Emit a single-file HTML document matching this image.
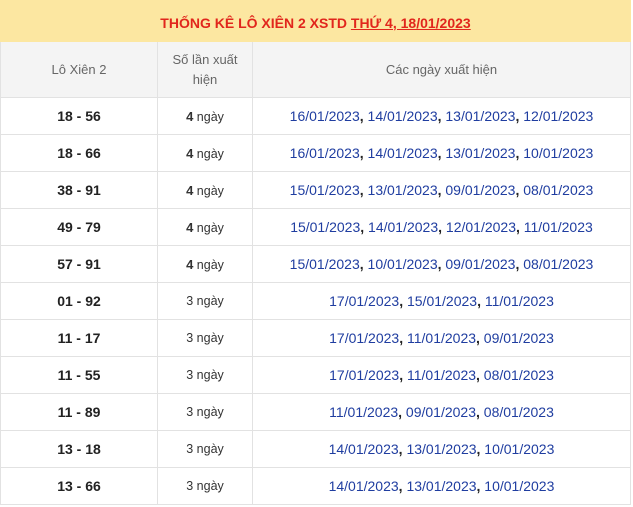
<!DOCTYPE html>
<html><head><meta charset="utf-8"><style>
body{margin:0;background:#fff;font-family:"Liberation Sans",Arial,sans-serif;}
.t{position:absolute;left:0;top:0;width:631px;border-collapse:collapse;table-layout:fixed}
td,th{border:1px solid #e2e2e2;text-align:center;padding:0}
.title{background:#fce7a1;height:41px;color:#e1261c;font-weight:bold;font-size:14px;border-color:#fce7a1;padding-top:3px;box-sizing:border-box}
.title u{text-decoration:underline}
th{background:#f4f4f4;font-weight:normal;color:#666;font-size:13px;height:55px;line-height:20px}
td{height:36px;font-size:13px}
.a{font-weight:bold;font-size:14px;color:#222}
.b{color:#333;font-size:12.5px}
.b b{font-size:13px}
.c{color:#1f3da0;font-size:14px}
.c b{color:#222}
</style></head><body>
<table class="t">
<colgroup><col style="width:157px"><col style="width:95px"><col></colgroup>
<tr><td colspan="3" class="title">THỐNG KÊ LÔ XIÊN 2 XSTD <u>THỨ 4, 18/01/2023</u></td></tr>
<tr><th>Lô Xiên 2</th><th>Số lần xuất<br>hiện</th><th>Các ngày xuất hiện</th></tr>
<tr><td class="a">18 - 56</td><td class="b"><b>4</b> ngày</td><td class="c">16/01/2023<b>,</b> 14/01/2023<b>,</b> 13/01/2023<b>,</b> 12/01/2023</td></tr>
<tr><td class="a">18 - 66</td><td class="b"><b>4</b> ngày</td><td class="c">16/01/2023<b>,</b> 14/01/2023<b>,</b> 13/01/2023<b>,</b> 10/01/2023</td></tr>
<tr><td class="a">38 - 91</td><td class="b"><b>4</b> ngày</td><td class="c">15/01/2023<b>,</b> 13/01/2023<b>,</b> 09/01/2023<b>,</b> 08/01/2023</td></tr>
<tr><td class="a">49 - 79</td><td class="b"><b>4</b> ngày</td><td class="c">15/01/2023<b>,</b> 14/01/2023<b>,</b> 12/01/2023<b>,</b> 11/01/2023</td></tr>
<tr><td class="a">57 - 91</td><td class="b"><b>4</b> ngày</td><td class="c">15/01/2023<b>,</b> 10/01/2023<b>,</b> 09/01/2023<b>,</b> 08/01/2023</td></tr>
<tr><td class="a">01 - 92</td><td class="b">3 ngày</td><td class="c">17/01/2023<b>,</b> 15/01/2023<b>,</b> 11/01/2023</td></tr>
<tr><td class="a">11 - 17</td><td class="b">3 ngày</td><td class="c">17/01/2023<b>,</b> 11/01/2023<b>,</b> 09/01/2023</td></tr>
<tr><td class="a">11 - 55</td><td class="b">3 ngày</td><td class="c">17/01/2023<b>,</b> 11/01/2023<b>,</b> 08/01/2023</td></tr>
<tr><td class="a">11 - 89</td><td class="b">3 ngày</td><td class="c">11/01/2023<b>,</b> 09/01/2023<b>,</b> 08/01/2023</td></tr>
<tr><td class="a">13 - 18</td><td class="b">3 ngày</td><td class="c">14/01/2023<b>,</b> 13/01/2023<b>,</b> 10/01/2023</td></tr>
<tr><td class="a">13 - 66</td><td class="b">3 ngày</td><td class="c">14/01/2023<b>,</b> 13/01/2023<b>,</b> 10/01/2023</td></tr>
</table>
</body></html>
